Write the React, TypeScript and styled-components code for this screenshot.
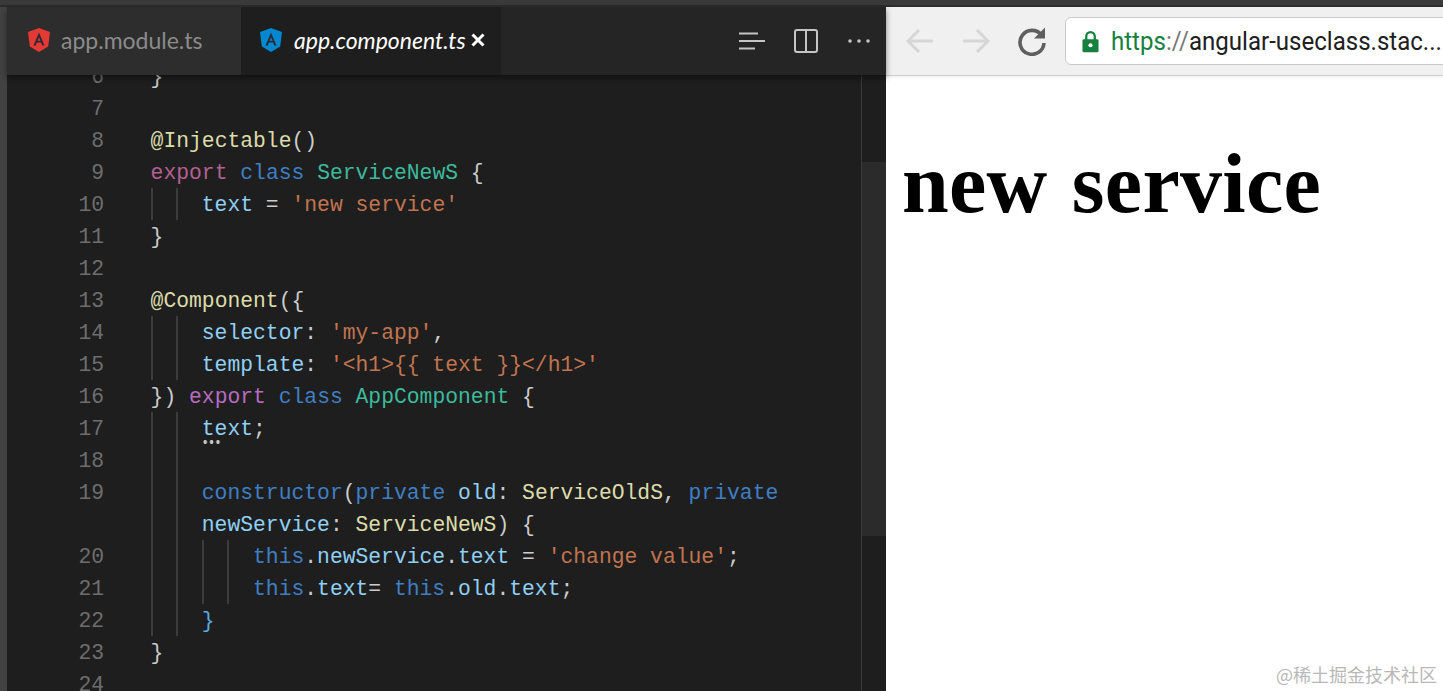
import { createGlobalStyle, styled } from "styled-components";

const Global = createGlobalStyle`
  html, body {
    margin: 0;
    padding: 0;
    height: 100%;
    overflow: hidden;
    background: #fff;
  }
  #root {
    height: 100%;
  }
`;

const Page = styled.div`
  display: flex;
  flex-direction: column;
  height: 691px;
  overflow: hidden;
`;

const TopStrip = styled.div`
  box-sizing: border-box;
  height: 7px;
  flex: none;
  background: #3a3a3a;
  border-bottom: 2px solid #2c2c2c;
`;

const Main = styled.div`
  display: flex;
  flex: 1;
  min-height: 0;
`;

const ActivityStrip = styled.div`
  width: 7px;
  flex: none;
  background: #424242;
`;

const Editor = styled.div`
  width: 879px;
  flex: none;
  display: flex;
  flex-direction: column;
  background: #1e1e1e;
`;

const TabBar = styled.div`
  position: relative;
  z-index: 1;
  display: flex;
  align-items: stretch;
  height: 68px;
  flex: none;
  background: #252525;
  box-shadow: 0 3px 6px rgba(0, 0, 0, 0.45);
`;

const Tab = styled.div<{ $active?: boolean }>`
  display: flex;
  align-items: center;
  box-sizing: border-box;
  width: ${(p) => (p.$active ? "260px" : "234px")};
  padding-left: ${(p) => (p.$active ? "19px" : "21px")};
  padding-bottom: 2px;
  background: ${(p) => (p.$active ? "#1e1e1e" : "#2d2d2d")};
`;

const TabLabel = styled.span<{ $active?: boolean }>`
  margin-left: ${(p) => (p.$active ? "12px" : "11px")};
  font-family: "Lato", sans-serif;
  font-size: 23px;
  font-style: ${(p) => (p.$active ? "italic" : "normal")};
  color: ${(p) => (p.$active ? "#ffffff" : "#8b8b8b")};
`;

const TabClose = styled.span`
  display: flex;
  margin-left: 5px;
`;

const TabActions = styled.div`
  margin-left: auto;
  display: flex;
  align-items: center;
  gap: 29px;
  padding-right: 15px;
  padding-bottom: 1px;
`;

const Body = styled.div`
  display: flex;
  flex: 1;
  min-height: 0;
  overflow: hidden;
`;

const Lines = styled.div`
  flex: 1;
  margin-top: -15px;
`;

const Line = styled.div`
  display: flex;
  height: 32px;
  font-family: "Liberation Mono", monospace;
  font-size: 21.35px;
  line-height: 34px;
  color: #cccccc;
  white-space: pre;
`;

const LineNumber = styled.span`
  flex: none;
  width: 97px;
  margin-right: 46.6px;
  text-align: right;
  color: #6e6e6e;
`;

const Guide = styled.span`
  flex: none;
  box-sizing: border-box;
  width: 25.62px;
  border-left: 2px solid #3c3c3c;
`;

const Token = styled.span<{ $color: string }>`
  color: ${(p) => p.$color};
`;

const Squiggle = styled.span`
  position: relative;
  &::after {
    content: "";
    position: absolute;
    left: 0;
    top: 23px;
    width: 19px;
    height: 4px;
    background: radial-gradient(circle, #c8c8c8 1.7px, transparent 2px) 0 0 / 6.4px 4px repeat-x;
  }
`;

const ScrollTrack = styled.div`
  flex: none;
  box-sizing: border-box;
  width: 25px;
  padding-top: 87px;
  border-left: 1px solid #3a3a3a;
`;

const ScrollThumb = styled.div`
  height: 374px;
  background: #2b2b2b;
`;

const Browser = styled.div`
  flex: 1;
  display: flex;
  flex-direction: column;
  min-width: 0;
  background: #ffffff;
  overflow: hidden;
`;

const BrowserBar = styled.div`
  position: relative;
  display: flex;
  align-items: center;
  box-sizing: border-box;
  height: 69px;
  flex: none;
  padding-left: 19px;
  background: #f0f0f0;
  border-bottom: 1px solid #cfcfcf;
  box-shadow: 0 1px 3px rgba(0, 0, 0, 0.08);
`;

const NavButtons = styled.div`
  display: flex;
  align-items: center;
  gap: 26px;
  margin-right: 18px;
`;

const AddressBox = styled.div`
  display: flex;
  align-items: center;
  flex: none;
  box-sizing: border-box;
  width: 420px;
  height: 48px;
  padding-left: 16px;
  background: #ffffff;
  border: 1px solid #cbcbcb;
  border-radius: 6px;
`;

const Url = styled.span`
  margin-left: 12px;
  font-family: "Roboto", sans-serif;
  font-size: 26px;
  color: #202020;
  white-space: nowrap;
  transform: scaleX(0.925);
  transform-origin: left center;
`;

const Scheme = styled.span`
  color: #16803f;
`;

const Slashes = styled.span`
  color: #777777;
`;

const Content = styled.div`
  flex: 1;
  padding: 0 16px;
  position: relative;
`;

const Heading = styled.h1`
  margin: 60px 0 0;
  font-family: "Liberation Serif", serif;
  font-size: 84px;
  font-weight: 700;
  line-height: 96px;
  letter-spacing: 0.3px;
  word-spacing: 3px;
  color: #000000;
  white-space: nowrap;
`;

const Watermark = styled.div`
  position: absolute;
  right: 6px;
  bottom: 4px;
  font-family: "Noto Sans CJK SC", sans-serif;
  font-size: 18px;
  color: #b8b8b8;
  white-space: nowrap;
`;

const C = {
  kw: "#b5608f",
  kw2: "#b66cc0",
  blue: "#3f7fc4",
  type: "#3cba9c",
  fn: "#dcdcaa",
  prop: "#8fd0f5",
  str: "#c27450",
};

type Part = [string, string] | string;
type Row = { n?: number; guides: number; parts: Part[]; squiggle?: boolean };

const rows: Row[] = [
  { n: 6, guides: 0, parts: ["}"] },
  { n: 7, guides: 0, parts: [] },
  { n: 8, guides: 0, parts: [["@Injectable", C.fn], "()"] },
  { n: 9, guides: 0, parts: [["export", C.kw], " ", ["class", C.blue], " ", ["ServiceNewS", C.type], " {"] },
  { n: 10, guides: 2, parts: [["text", C.prop], " = ", ["'new service'", C.str]] },
  { n: 11, guides: 0, parts: ["}"] },
  { n: 12, guides: 0, parts: [] },
  { n: 13, guides: 0, parts: [["@Component", C.fn], "({"] },
  { n: 14, guides: 2, parts: [["selector", C.prop], ": ", ["'my-app'", C.str], ","] },
  { n: 15, guides: 2, parts: [["template", C.prop], ": ", ["'<h1>{{ text }}</h1>'", C.str]] },
  { n: 16, guides: 0, parts: ["}) ", ["export", C.kw2], " ", ["class", C.blue], " ", ["AppComponent", C.type], " {"] },
  { n: 17, guides: 2, parts: [["text", C.prop], ";"], squiggle: true },
  { n: 18, guides: 2, parts: [] },
  {
    n: 19,
    guides: 2,
    parts: [["constructor", C.blue], "(", ["private", C.blue], " ", ["old", C.prop], ": ", ["ServiceOldS", C.fn], ", ", ["private", C.blue]],
  },
  { guides: 2, parts: [["newService", C.prop], ": ", ["ServiceNewS", C.fn], ") {"] },
  {
    n: 20,
    guides: 4,
    parts: [["this", C.blue], ".", ["newService", C.prop], ".", ["text", C.prop], " = ", ["'change value'", C.str], ";"],
  },
  {
    n: 21,
    guides: 4,
    parts: [["this", C.blue], ".", ["text", C.prop], "= ", ["this", C.blue], ".", ["old", C.prop], ".", ["text", C.prop], ";"],
  },
  { n: 22, guides: 2, parts: [["}", "#5aa9e6"]] },
  { n: 23, guides: 0, parts: ["}"] },
  { n: 24, guides: 0, parts: [] },
];

const AngularIcon = ({ color }: { color: string }) => (
  <svg width="22" height="24" viewBox="0 0 22 24">
    <path d="M11 0 L22 4 L20.2 18.6 L11 24 L1.8 18.6 L0 4 Z" fill={color} />
    <path
      d="M11 4.5 L5.5 17.5 H7.8 L8.9 14.6 H13.1 L14.2 17.5 H16.5 Z M11 9.2 L12.4 12.8 H9.6 Z"
      fill="#2b2b33"
      fillRule="evenodd"
    />
  </svg>
);

const CloseIcon = () => (
  <svg width="14" height="14" viewBox="0 0 14 14">
    <path d="M1.5 1.5 L12.5 12.5 M12.5 1.5 L1.5 12.5" stroke="#fff" strokeWidth="3" />
  </svg>
);

const OutlineIcon = () => (
  <svg width="26" height="18" viewBox="0 0 26 18">
    <path d="M0 1.5 H19 M0 9 H26 M0 16.5 H16" stroke="#c5c5c5" strokeWidth="2" fill="none" />
  </svg>
);

const SplitIcon = () => (
  <svg width="24" height="24" viewBox="0 0 24 24">
    <rect x="1" y="1" width="22" height="22" rx="2" stroke="#c5c5c5" strokeWidth="2" fill="none" />
    <path d="M12 1 V23" stroke="#c5c5c5" strokeWidth="2" />
  </svg>
);

const MoreIcon = () => (
  <svg width="24" height="4" viewBox="0 0 24 4">
    <circle cx="3" cy="2" r="1.8" fill="#c5c5c5" />
    <circle cx="12" cy="2" r="1.8" fill="#c5c5c5" />
    <circle cx="21" cy="2" r="1.8" fill="#c5c5c5" />
  </svg>
);

const ArrowIcon = ({ flip }: { flip?: boolean }) => (
  <svg width="30" height="26" viewBox="0 0 30 26" style={flip ? { transform: "scaleX(-1)" } : undefined}>
    <path d="M28 13 H4 M14 2 L3 13 L14 24" stroke="#d6d6d6" strokeWidth="3" fill="none" />
  </svg>
);

const ReloadIcon = () => (
  <svg width="30" height="30" viewBox="0 0 30 30">
    <path d="M24.5 9 A12 12 0 1 0 27 17" stroke="#5f5f5f" strokeWidth="3.6" fill="none" />
    <path d="M28 1.5 V12.5 H17 Z" fill="#5f5f5f" />
  </svg>
);

const LockIcon = () => (
  <svg width="17" height="23" viewBox="0 0 18 24">
    <path d="M4.5 11 V6.5 A4.5 4.5 0 0 1 13.5 6.5 V11" stroke="#16803f" strokeWidth="2.4" fill="none" />
    <rect x="0.5" y="9.5" width="17" height="14" rx="1.5" fill="#16803f" />
    <circle cx="9" cy="16" r="2.2" fill="#fff" />
  </svg>
);

export default function App() {
  return (
    <Page>
      <Global />
      <TopStrip />
      <Main>
        <ActivityStrip />
        <Editor>
          <TabBar>
            <Tab>
              <AngularIcon color="#e53935" />
              <TabLabel>app.module.ts</TabLabel>
            </Tab>
            <Tab $active>
              <AngularIcon color="#0288d1" />
              <TabLabel $active>app.component.ts</TabLabel>
              <TabClose>
                <CloseIcon />
              </TabClose>
            </Tab>
            <TabActions>
              <OutlineIcon />
              <SplitIcon />
              <MoreIcon />
            </TabActions>
          </TabBar>
          <Body>
            <Lines>
              {rows.map((row, i) => (
                <Line key={i}>
                  <LineNumber>{row.n}</LineNumber>
                  {Array.from({ length: row.guides }).map((_, g) => (
                    <Guide key={g} />
                  ))}
                  <span>
                    {row.parts.map((part, k) => {
                      if (typeof part === "string") return <span key={k}>{part}</span>;
                      const token = <Token key={k} $color={part[1]}>{part[0]}</Token>;
                      return row.squiggle && k === 0 ? <Squiggle key={k}>{token}</Squiggle> : token;
                    })}
                  </span>
                </Line>
              ))}
            </Lines>
            <ScrollTrack>
              <ScrollThumb />
            </ScrollTrack>
          </Body>
        </Editor>
        <Browser>
          <BrowserBar>
            <NavButtons>
              <ArrowIcon />
              <ArrowIcon flip />
              <ReloadIcon />
            </NavButtons>
            <AddressBox>
              <LockIcon />
              <Url>
                <Scheme>https</Scheme>
                <Slashes>://</Slashes>angular-useclass.stac...
              </Url>
            </AddressBox>
          </BrowserBar>
          <Content>
            <Heading>new service</Heading>
            <Watermark>@稀土掘金技术社区</Watermark>
          </Content>
        </Browser>
      </Main>
    </Page>
  );
}
